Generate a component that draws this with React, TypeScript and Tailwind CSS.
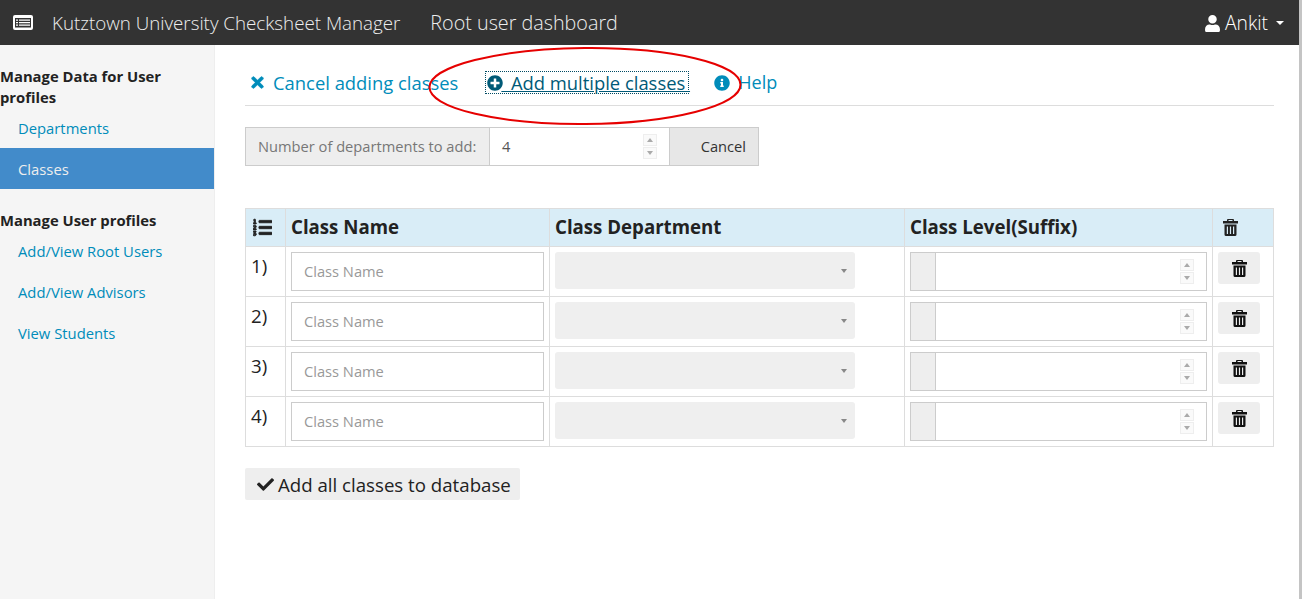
import React from 'react';
import { FaTimes, FaPlusCircle, FaInfoCircle, FaListOl, FaCheck, FaUser } from 'react-icons/fa';

const TrashIcon = ({ className }: { className?: string }) => (
  <svg viewBox="0 0 15 17" className={className} fill="currentColor">
    <path d="M5 0h5a1 1 0 0 1 1 1v1h4v2.500H0V2h4V1a1 1 0 0 1 1-1zm.500 1v1h4V1h-4z" fillRule="evenodd" />
    <path fillRule="evenodd" d="M1.500 5.500h12V15.500A1.500 1.500 0 0 1 12 17H3a1.500 1.500 0 0 1-1.500-1.500V5.500zM3.800 7.500v7.500h1.200V7.500H3.800zm3.100 0v7.500h1.200V7.500H6.900zm3.100 0v7.500h1.200V7.500H10z" />
  </svg>
);

const TableIcon = () => (
  <svg viewBox="0 0 20 15" className="h-[15px] w-5">
    <rect x="0" y="0" width="20" height="15" rx="2" fill="#fff" />
    <path d="M2 3h16v9.500H2z" fill="#333" />
    <path d="M3 4.500h2v1.300H3zM6 4.500h11v1.300H6zM3 7h2v1.300H3zM6 7h11v1.300H6zM3 9.500h2v1.300H3zM6 9.500h11v1.300H6z" fill="#fff" />
  </svg>
);

const Spinner = () => (
  <div className="flex h-[25px] w-[14px] flex-col gap-px">
    <div className="flex flex-1 items-center justify-center border border-[#eee] bg-[#fafafa]">
      <div className="h-0 w-0 border-x-[3px] border-b-[4px] border-x-transparent border-b-[#aaa]" />
    </div>
    <div className="flex flex-1 items-center justify-center border border-[#eee] bg-[#fafafa]">
      <div className="h-0 w-0 border-x-[3px] border-t-[4px] border-x-transparent border-t-[#aaa]" />
    </div>
  </div>
);

const ClassRow = ({ n }: { n: number }) => (
  <tr>
    <td className="h-[50px] border border-[#ddd] px-[5px] pt-[5px] align-top text-[18.67px] leading-[28px] text-[#222]">{n})</td>
    <td className="border border-[#ddd] px-[5px] pt-[5px] align-top">
      <input
        placeholder="Class Name"
        className="block h-[39px] w-full border border-[#ccc] px-3 pb-[2px] text-[14.67px] text-[#222] outline-none placeholder:text-[#999]"
      />
    </td>
    <td className="border border-[#ddd] px-[5px] pt-[5px] align-top">
      <div className="flex h-[37px] w-[300px] items-center justify-end rounded-[3px] bg-[#efefef] pr-2">
        <div className="h-0 w-0 border-x-[3.5px] border-t-[4px] border-x-transparent border-t-[#888]" />
      </div>
    </td>
    <td className="border border-[#ddd] px-[5px] pt-[5px] align-top">
      <div className="flex h-[39px] items-center border border-[#ccc]">
        <div className="h-full w-[25px] border-r border-[#ccc] bg-[#eee]" />
        <div className="flex flex-1 justify-end pr-[12px]">
          <Spinner />
        </div>
      </div>
    </td>
    <td className="border border-[#ddd] px-[5px] pt-[5px] align-top">
      <button className="flex h-[32px] w-[42px] items-center justify-center rounded-[3px] bg-[#eee] text-[#111]">
        <TrashIcon className="h-[17px] w-[15px]" />
      </button>
    </td>
  </tr>
);

export default function App() {
  return (
    <div className="relative flex h-[599px] w-[1302px] overflow-hidden bg-white font-['Open_Sans',sans-serif]">
      <div className="w-[1299px] shrink-0">
        <header className="flex h-[45px] items-center bg-[#333] text-[#eee]">
          <div className="ml-[13px] mr-[19px]"><TableIcon /></div>
          <span className="pt-px text-[18.75px] font-light">Kutztown University Checksheet Manager</span>
          <span className="ml-[30px] pt-px text-[19.75px] font-light">Root user dashboard</span>
          <div className="ml-auto mr-[15px] flex items-center pt-px text-white">
            <FaUser className="mr-1 text-[17px]" />
            <span className="text-[19.25px] font-light">Ankit</span>
            <div className="ml-2 h-0 w-0 border-x-4 border-t-4 border-x-transparent border-t-white" />
          </div>
        </header>

        <div className="flex h-[554px]">
          <aside className="w-[215px] shrink-0 border-r border-[#eee] bg-[#f5f5f5] pt-[21px] text-[14.8px]">
            <h4 className="text-[14.8px] font-bold leading-[21px] text-[#222]">Manage Data for User profiles</h4>
            <a className="block h-[40px] pl-[18px] leading-[41px] text-[#008cba]">Departments</a>
            <a className="block h-[41px] w-[214px] bg-[#428bca] pl-[18px] leading-[43px] text-[#eee]">Classes</a>
            <h4 className="mt-[21px] text-[14.8px] font-bold leading-[21px] text-[#222]">Manage User profiles</h4>
            <a className="block h-[41px] pl-[18px] leading-[41px] text-[#008cba]">Add/View Root Users</a>
            <a className="block h-[41px] pl-[18px] leading-[41px] text-[#008cba]">Add/View Advisors</a>
            <a className="block h-[41px] pl-[18px] leading-[41px] text-[#008cba]">View Students</a>
          </aside>

          <main className="w-[1059px] pl-[30px]">
            <div className="flex h-[61px] w-[1029px] items-center border-b border-[#ddd] pt-[15px] text-[18.4px] text-[#008cba]">
              <FaTimes className="ml-[4px] mr-[7px] text-[17px]" stroke="currentColor" strokeWidth={20} />
              <span>Cancel adding classes</span>
              <span className="ml-[27px] flex h-[23px] w-[204px] items-center border border-dotted border-[#004b63] pl-[1px] leading-[21px] text-[#005a77]">
                <FaPlusCircle className="relative z-10 shrink-0 text-[16px]" />
                <span className="-ml-[2px] whitespace-pre underline">{'  Add multiple classes '}</span>
              </span>
              <FaInfoCircle className="ml-[25px] mr-[8px] text-[16px]" />
              <span className="text-[18px]">Help</span>
            </div>

            <div className="mt-[21px] flex h-[39px] w-[514px] border border-[#ccc] text-[14.67px]">
              <div className="flex w-[244px] items-center border-r border-[#ccc] bg-[#eee] pb-px pl-3 text-[#777]">Number of departments to add:</div>
              <div className="flex w-[179px] items-center justify-between bg-white pb-px pl-3 pr-[12px] text-[#555]">
                4
                <Spinner />
              </div>
              <div className="flex flex-1 items-center justify-end border-l border-[#ccc] bg-[#e7e7e7] pb-px pr-3 text-[#333]">Cancel</div>
            </div>

            <table className="mt-[42px] w-[1028px] table-fixed border-collapse">
              <colgroup>
                <col className="w-[40px]" />
                <col className="w-[264px]" />
                <col className="w-[355px]" />
                <col className="w-[308px]" />
                <col className="w-[61px]" />
              </colgroup>
              <thead>
                <tr className="h-[38px] bg-[#d9edf7] text-left text-[18.67px] font-bold text-[#222]">
                  <th className="border border-[#ddd] px-[7px]"><FaListOl className="text-[19px]" stroke="currentColor" strokeWidth={24} /></th>
                  <th className="border border-[#ddd] px-[5px] pb-px">Class Name</th>
                  <th className="border border-[#ddd] px-[5px] pb-px">Class Department</th>
                  <th className="border border-[#ddd] px-[5px] pb-px">Class Level(Suffix)</th>
                  <th className="border border-[#ddd] px-[10px]"><TrashIcon className="h-[17px] w-[15px]" /></th>
                </tr>
              </thead>
              <tbody>
                {[1, 2, 3, 4].map((n) => <ClassRow key={n} n={n} />)}
              </tbody>
            </table>

            <button className="mt-[21px] flex h-[32px] w-[275px] items-center rounded-[2px] bg-[#eee] pl-3 pt-px text-[18.67px] text-[#222]">
              <FaCheck className="mr-[4px] text-[17px]" />
              Add all classes to database
            </button>
          </main>
        </div>
      </div>
      <div className="w-[3px] bg-[#c4c4c4]" />

      <svg className="pointer-events-none absolute left-[425px] top-[44px]" width="320" height="84" viewBox="0 0 320 84">
        <ellipse cx="160" cy="42" rx="155.500" ry="38" fill="none" stroke="#e60000" strokeWidth="2" transform="rotate(-0.5 160 42)" />
      </svg>
    </div>
  );
}
